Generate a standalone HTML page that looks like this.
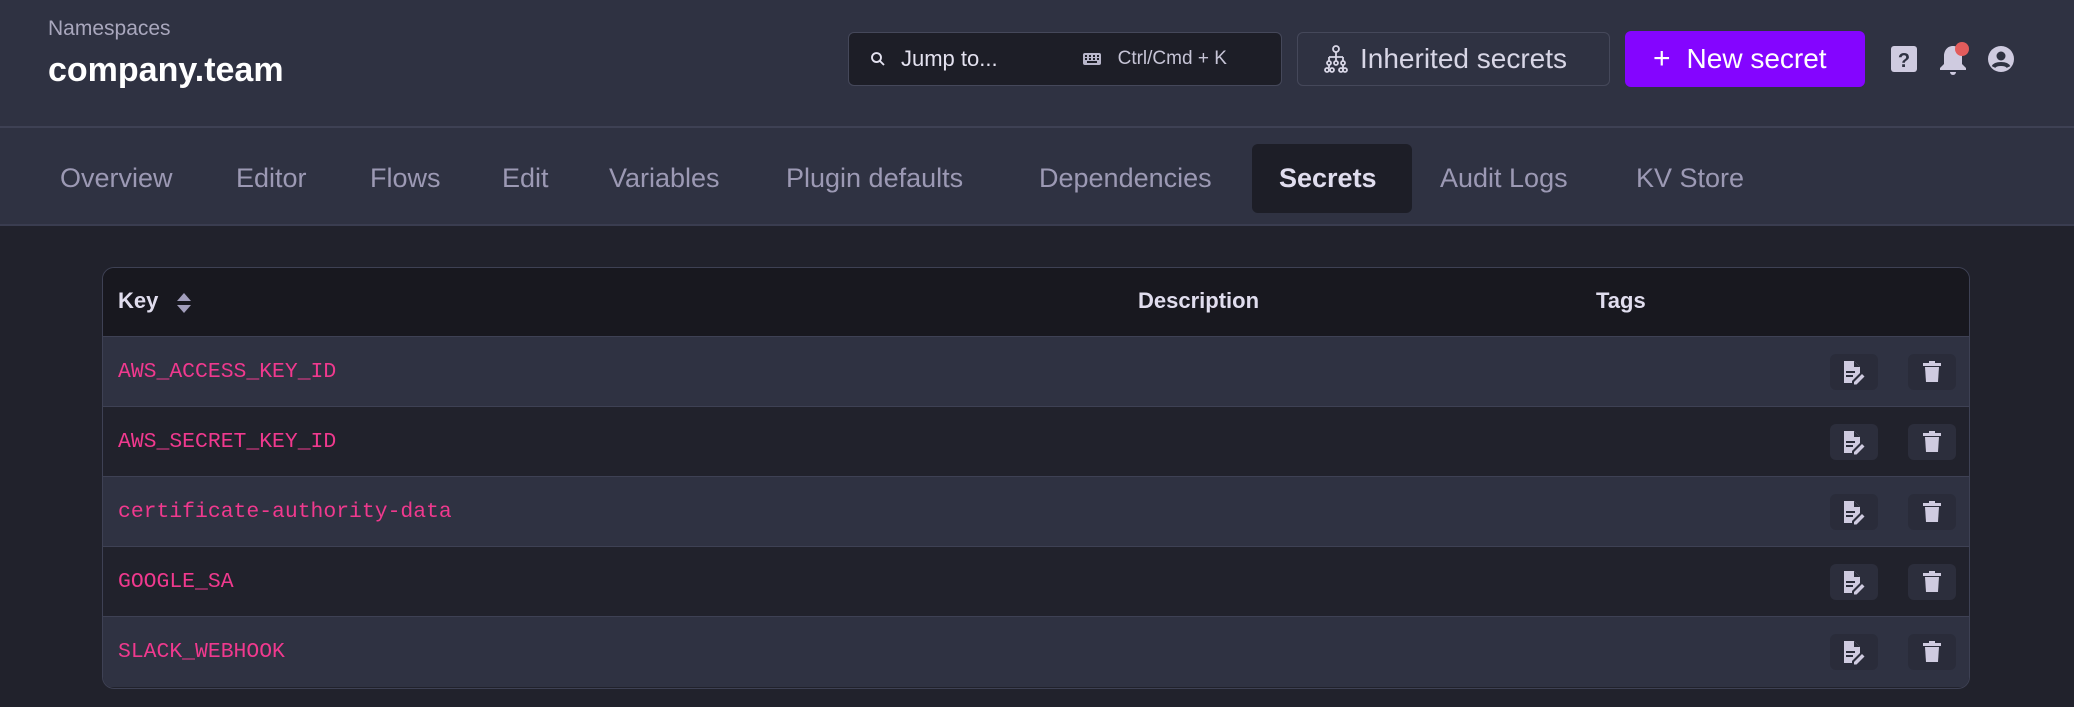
<!DOCTYPE html>
<html><head><meta charset="utf-8"><style>
*{box-sizing:border-box;margin:0;padding:0}
body{width:2074px;height:707px;background:#21222c;font-family:"Liberation Sans",sans-serif;overflow:hidden;position:relative}
.hdr{position:absolute;left:0;top:0;width:2074px;height:128px;background:#2f3242;border-bottom:2px solid #3e4154}
.tabs{position:absolute;left:0;top:128px;width:2074px;height:98px;background:#2f3242;border-bottom:2px solid #3a3d50}
.ns{position:absolute;left:48px;top:17px;font-size:21px;color:#a9a7bd}
.title{position:absolute;left:48px;top:51px;font-size:34px;font-weight:bold;color:#fff}
.btn{position:absolute;top:32px;height:54px;border-radius:6px;display:flex;align-items:center}
.jump{left:848px;width:434px;background:#1d1e27;border:1px solid #45485a;color:#e4e2f0;font-size:22px}
.inh{left:1297px;width:313px;border:1px solid #45485a;color:#d8d6e6;font-size:28px}
.new{left:1625px;top:31px;height:56px;width:240px;background:#8405ff;color:#fff;font-size:28px;border-radius:6px}
.tab{position:absolute;top:163px;font-size:27px;color:#9c99b4}
.active{position:absolute;left:1252px;top:144px;width:160px;height:69px;background:#1d1e27;border-radius:6px}
.tbl{position:absolute;left:102px;top:267px;width:1868px;height:422px;border:1.5px solid #3e4154;border-radius:12px;overflow:hidden}
.th{height:69px;background:#18181f;border-bottom:1.5px solid #3e4154;position:relative}
.th span{position:absolute;top:20px;font-size:22px;font-weight:bold;color:#e0ddee}
.row{height:70px;position:relative;border-bottom:1.5px solid #3e4154}
.row:last-child{border-bottom:none}
.r1{background:#2f3242}.r2{background:#21222c}
.k{position:absolute;left:15px;top:23px;font-family:"Liberation Mono",monospace;font-size:21.4px;color:#f0398e}
.ib{position:absolute;top:17px;width:48px;height:36px;border-radius:6px;display:flex;align-items:center;justify-content:center}
.r1 .ib{background:#2a2c3a}.r2 .ib{background:#2c2e3c}
</style></head><body>
<div class="hdr">
<div class="ns">Namespaces</div>
<div class="title">company.team</div>
<div class="btn jump">
<svg style="margin-left:20px" width="18" height="18" viewBox="0 0 24 24"><circle cx="10" cy="10" r="6" fill="none" stroke="#e4e2f0" stroke-width="2.5"/><path d="M14.5 14.5L20 20" stroke="#e4e2f0" stroke-width="2.5"/></svg>
<span style="margin-left:14px">Jump to...</span>
<svg style="margin-left:84px" width="20" height="16" viewBox="0 0 20 16"><rect x="1" y="2" width="18" height="12" rx="2" fill="#b8b6ca"/><g fill="#1d1e27"><rect x="3" y="4" width="2" height="2"/><rect x="7" y="4" width="2" height="2"/><rect x="11" y="4" width="2" height="2"/><rect x="15" y="4" width="2" height="2"/><rect x="3" y="7" width="2" height="2"/><rect x="7" y="7" width="2" height="2"/><rect x="11" y="7" width="2" height="2"/><rect x="15" y="7" width="2" height="2"/><rect x="5" y="10" width="10" height="2"/></g></svg>
<span style="margin-left:16px;font-size:19px;color:#c6c4d6">Ctrl/Cmd + K</span>
</div>
<div class="btn inh">
<svg style="margin-left:26px" width="24" height="28" viewBox="0 0 24 28" fill="none" stroke="#d8d6e6" stroke-width="1.8"><circle cx="12" cy="4" r="3"/><path d="M12 7v5M5 12h14M5 12v4M12 12v4M19 12v4M5 20v3M19 20v3"/><circle cx="5" cy="18" r="2"/><circle cx="12" cy="18" r="2"/><circle cx="19" cy="18" r="2"/><circle cx="3" cy="25" r="2"/><circle cx="8" cy="25" r="2"/><circle cx="17" cy="25" r="2"/><circle cx="21" cy="25" r="2"/></svg>
<span style="margin-left:12px">Inherited secrets</span>
</div>
<div class="btn new"><span style="margin-left:28px;font-size:30px">+</span><span style="margin-left:16px">New secret</span></div>
<svg style="position:absolute;left:1890px;top:45px" width="28" height="28" viewBox="0 0 28 28"><rect x="1" y="1" width="26" height="26" rx="3" fill="#cfcbe0"/><text x="14" y="22" font-size="20" font-weight="bold" text-anchor="middle" fill="#2f3242" font-family="Liberation Sans">?</text></svg>
<svg style="position:absolute;left:1937px;top:40px" width="36" height="38" viewBox="0 0 36 38"><path d="M16 6c-6 0-9 5-9 10v8l-4 4v2h26v-2l-4-4v-8c0-5-3-10-9-10z" fill="#cfcbe0"/><path d="M13 32a3 3 0 0 0 6 0z" fill="#cfcbe0"/><circle cx="25" cy="9" r="7" fill="#e25c5c"/></svg>
<svg style="position:absolute;left:1987px;top:45px" width="28" height="28" viewBox="0 0 28 28"><circle cx="14" cy="14" r="13" fill="#cfcbe0"/><circle cx="14" cy="11" r="4.5" fill="#2f3242"/><path d="M6.5 22c2-4 13-4 15 0" stroke="#2f3242" stroke-width="4" fill="none"/></svg>
</div>
<div class="tabs"></div>
<div class="active"></div>
<div class="tab" style="left:60px">Overview</div>
<div class="tab" style="left:236px">Editor</div>
<div class="tab" style="left:370px">Flows</div>
<div class="tab" style="left:502px">Edit</div>
<div class="tab" style="left:609px">Variables</div>
<div class="tab" style="left:786px">Plugin defaults</div>
<div class="tab" style="left:1039px">Dependencies</div>
<div class="tab" style="left:1279px;color:#e0ddee;font-weight:bold">Secrets</div>
<div class="tab" style="left:1440px">Audit Logs</div>
<div class="tab" style="left:1636px">KV Store</div>
<div class="tbl">
<div class="th"><span style="left:15px">Key</span>
<svg style="position:absolute;left:72px;top:22px" width="18" height="26" viewBox="0 0 18 26"><path d="M9 3l7 8H2z M9 23l7-8H2z" fill="#a29ebc"/></svg>
<span style="left:1035px">Description</span><span style="left:1493px">Tags</span></div>
<div class="row r1"><div class="k">AWS_ACCESS_KEY_ID</div>ICONS</div>
<div class="row r2"><div class="k">AWS_SECRET_KEY_ID</div>ICONS</div>
<div class="row r1"><div class="k">certificate-authority-data</div>ICONS</div>
<div class="row r2"><div class="k">GOOGLE_SA</div>ICONS</div>
<div class="row r1"><div class="k">SLACK_WEBHOOK</div>ICONS</div>
</div>
<script>
var ic='<div class="ib" style="left:1727px"><svg width="24" height="26" viewBox="0 0 24 26"><path d="M2 2h10l6 6v6l-8 8v2H2z" fill="#cfcbe0"/><path d="M12 2v6h6" fill="#2a2c3a"/><rect x="4" y="12" width="9" height="2" fill="#2a2c3a"/><rect x="4" y="16" width="7" height="2" fill="#2a2c3a"/><path d="M12 23l8-8 2.5 2.5-8 8H12z" fill="#cfcbe0"/></svg></div><div class="ib" style="left:1805px"><svg width="20" height="24" viewBox="0 0 20 24"><rect x="1" y="3" width="18" height="3" fill="#cfcbe0"/><rect x="7" y="1" width="6" height="3" fill="#cfcbe0"/><path d="M3 7h14l-1 15H4z" fill="#cfcbe0"/></svg></div>';
document.querySelectorAll('.row').forEach(function(r){r.innerHTML=r.innerHTML.replace('ICONS',ic);});
</script>
</body></html>
